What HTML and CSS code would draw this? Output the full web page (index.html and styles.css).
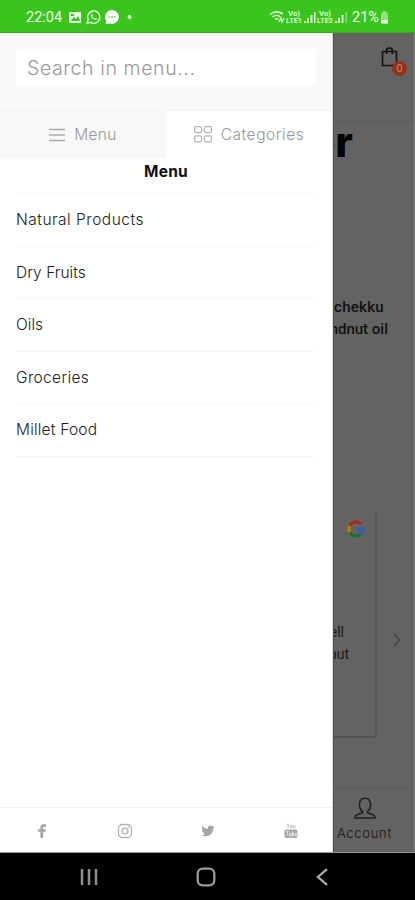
FILE: index.html
```html
<!DOCTYPE html>
<html lang="en">
<head>
<meta charset="utf-8">
<title>Menu</title>
<link rel="stylesheet" href="styles.css">
</head>
<body>
<div class="phone">
  <header class="status">
    <span class="time">22:04</span>
    <svg class="s-left" width="66" height="16" viewBox="0 0 66 16">
      <rect x="1" y="3" width="12" height="11" rx="1" fill="#e9ffe4"/>
      <path d="M3 12l3-4 2 2 2-3 2 5zM3 5h3v2H3z" fill="#3ac51c"/>
      <path d="M19 14.500l1.200-3.600A6.200 6.200 0 1 1 22.500 13.400z" fill="none" stroke="#e9ffe4" stroke-width="1.400"/>
      <path d="M23 5.500c.8-.9 1.300-.3 1.800 1l-.6 1c.6 1 1.200 1.600 2.200 2.100l.9-.8 1.700 1c-.4 3-6.700-.4-6-4.300z" fill="#e9ffe4"/>
      <path d="M44 1a7 7 0 1 1-2.500 13.600L37.500 15l.8-3A7 7 0 0 1 44 1z" fill="#fff"/>
      <path d="M40.500 8h7" stroke="#6fd65a" stroke-width="1.500" stroke-dasharray="1.700 1"/>
      <circle cx="61.500" cy="8" r="1.900" fill="#e9ffe4"/>
    </svg>
    <svg class="s-right" width="79" height="16" viewBox="0 0 79 16" fill="#d8f8d0">
      <path d="M1 5.500Q7 .5 14 5M3.500 8q4-3.500 8 0M6 10.500q2-1.500 3.500 0" fill="none" stroke="#d8f8d0" stroke-width="1.600"/>
      <path d="M10 13l2-4 1 4 2-4" fill="none" stroke="#d8f8d0" stroke-width="1.200"/>
      <text x="19" y="7" class="lte" textLength="12" lengthAdjust="spacingAndGlyphs">Vo)</text>
      <text x="17" y="14" class="lte" textLength="16" lengthAdjust="spacingAndGlyphs">LTE1</text>
      <path d="M35 12h2v2h-2zM38 9h2v5h-2zM41.500 6h2v8h-2zM45 3h1.500v11H45z"/>
      <text x="50" y="7" class="lte" textLength="12" lengthAdjust="spacingAndGlyphs">Vo)</text>
      <text x="48" y="14" class="lte" textLength="16" lengthAdjust="spacingAndGlyphs">LTE2</text>
      <path d="M66 12h2v2h-2zM69 9h2v5h-2zM72.500 6h2v8h-2z"/><path d="M76.500 3H78v11h-1.500z" opacity=".5"/>
    </svg>
    <span class="percent">21%</span>
    <svg class="battery" width="9" height="13" viewBox="0 0 9 13"><path d="M3 0h3v1.500h2V9H1V1.500h2z" fill="#8fe27e"/><path d="M1 9h7v3.500H1z" fill="#fff"/></svg>
  </header>

  <main class="main">
    <aside class="drawer">
      <div class="search-wrap"><div class="search">Search in menu...</div></div>
      <div class="tabs">
        <div class="tab active">
          <svg width="16" height="14" viewBox="0 0 16 14"><path d="M0 1.500h16M0 7h16M0 12.500h16" stroke="#aaa" stroke-width="1.500"/></svg>
          <span class="tab-menu">Menu</span>
        </div>
        <div class="tab">
          <svg width="18" height="17" viewBox="0 0 18 17" fill="none" stroke="#b3b3b3" stroke-width="1.200"><rect x=".6" y=".6" width="7" height="6" rx="1.500"/><rect x="10.400" y=".6" width="7" height="6" rx="1.500"/><rect x=".6" y="9.900" width="7" height="6" rx="1.500"/><rect x="10.400" y="9.900" width="7" height="6" rx="1.500"/></svg>
          <span class="tab-cat">Categories</span>
        </div>
      </div>
      <div class="title">Menu</div>
      <nav class="items">
        <a class="item natural">Natural Products</a>
        <a class="item dry">Dry Fruits</a>
        <a class="item oils">Oils</a>
        <a class="item groceries">Groceries</a>
        <a class="item millet">Millet Food</a>
      </nav>
      <footer class="social">
        <svg width="16" height="16" viewBox="0 0 16 16"><path d="M12 1.200v2.500h-1.600c-1 0-1.200.5-1.200 1.200v1.400h2.700l-.4 2.500H9.200V15H6.400V8.800H4V6.300h2.400v-2C6.400 2 7.800 1 9.900 1z" fill="#a6a6a6"/></svg>
        <svg width="16" height="16" viewBox="0 0 16 16" fill="none" stroke="#b3b3b3" stroke-width="1.300"><rect x="1.500" y="1.500" width="13" height="13" rx="3.800"/><circle cx="8" cy="8" r="2.900"/><circle cx="11.700" cy="4.300" r=".4"/></svg>
        <svg width="16" height="16" viewBox="0 0 16 16"><path d="M14.700 4.200l-1.400 1.300c.1 5.200-5.600 10-11.900 6.700 1.500 0 2.700-.3 3.800-1.200-1.200-.1-2-.7-2.400-1.800h1.100C2.600 8.700 1.900 7.700 1.800 6.400l1.200.3C1.800 5.700 1.600 4.300 2.300 3c1.500 1.800 3.200 2.700 5.500 2.900C7.400 3.200 10.300 1.500 12.300 3.300l1.700-.6-1 1.600z" fill="#a6a6a6"/></svg>
        <svg width="16" height="16" viewBox="0 0 16 16" fill="none"><path d="M4 .5l1.200 2.300L6.400.5M5.200 2.800V5M7.500 2.200h1.300V5H7.500zM10.300 2v3H12V2" stroke="#c2c2c2"/><rect x="1.500" y="6.500" width="13" height="8.500" rx="1.800" fill="#a8a8a8"/><path d="M3.300 8.500h2.500M4.600 8.500v4.500M6.800 9.800V13h1.300V9.800M9.600 8.300V13h1.200v-2.800H9.600M14 12.500h-1.500v-2.300h1v1.200" stroke="#eee" stroke-width=".8"/></svg>
      </footer>
    </aside>

    <section class="page">
      <div class="page-head">
        <div class="cart">
          <svg width="18" height="22" viewBox="0 0 18 22" fill="none" stroke="#151515" stroke-width="1.700"><path d="M1.500 4.500h14v14h-14zM5.500 7V3.500q0-2.500 3-2.500t3 2.500V7"/></svg>
          <span class="badge">0</span>
        </div>
      </div>
      <div class="headline"><span>er</span></div>
      <div class="copy"><div class="line1">chekku</div><div class="line2">groundnut oil</div></div>
      <div class="review-row">
        <div class="review">
          <svg class="google" width="18" height="18" viewBox="0 0 18 18" fill="none" stroke-width="3.200"><path d="M14.100 4.100A7 7 0 0 0 2.800 5.700" stroke="#a8281f"/><path d="M2.800 5.700a7 7 0 0 0 0 6.600" stroke="#b58200"/><path d="M2.800 12.300a7 7 0 0 0 10.500 2.200" stroke="#17742f"/><path d="M13.300 14.500A7 7 0 0 0 16 9H9" stroke="#2f5fae"/></svg>
          <div class="review-text"><div class="r1">well</div><div class="r2">coconut</div></div>
        </div>
        <svg class="next" width="8" height="16" viewBox="0 0 8 16"><path d="M1.500 1.500L6 8l-4.500 6.500" fill="none" stroke="#484848" stroke-width="1.800"/></svg>
      </div>
      <div class="account">
        <svg width="22" height="22" viewBox="0 0 22 22" fill="none" stroke="#202020" stroke-width="1.600"><path d="M8.500 14.500C6 12.500 5.200 9.500 5.500 6.500 5.900 3 8 1.200 11 1.200s5.100 1.800 5.500 5.300c.3 3-.5 6-3 8v1.300l6 2.200q1.500.7 1.500 3H1q0-2.300 1.500-3l6-2.200z"/></svg>
        <span>Account</span>
      </div>
    </section>
  </main>

  <footer class="nav">
    <svg width="18" height="18" viewBox="0 0 18 18"><path d="M2 1v16M9 1v16M16 1v16" stroke="#8e8e8e" stroke-width="2.500"/></svg>
    <svg width="20" height="20" viewBox="0 0 20 20"><rect x="1.700" y="1.700" width="16.600" height="16.600" rx="5" fill="none" stroke="#999" stroke-width="2.300"/></svg>
    <svg width="18" height="18" viewBox="0 0 18 18"><path d="M13 1.200L4 9l9 7.800" fill="none" stroke="#aaa" stroke-width="2.300"/></svg>
  </footer>
</div>
</body>
</html>
```
FILE: styles.css
```css
* { box-sizing: border-box; }
body { margin: 0; background: #000; font-family: Inter, "Open Sans", sans-serif; }
svg { display: block; flex: none; }
.phone { width: 415px; height: 900px; display: flex; flex-direction: column; overflow: hidden; }
.status { height: 33px; background: #3ac51c; border-bottom: 1px solid #33ad1a; display: flex; align-items: center; padding: 2px 24px 0 26px; color: #effff0; font-family: Roboto, sans-serif; font-size: 14.500px; white-space: nowrap; }
.time { width: 42px; }
.s-right { margin-left: auto; }
.lte { font: bold 7px Roboto, sans-serif; }
.percent { margin-left: 4px; width: 28px; }
.battery { margin-left: 0; margin-right: 2px; }
.main { height: 820px; display: flex; border-bottom: 1px solid #999; }
.drawer { width: 333px; background: #fff; display: flex; flex-direction: column; border-right: 1px solid #ddd; }
.search-wrap { height: 78px; background: #f9f9f9; border-bottom: 1px solid #f3f3f3; padding: 16px 16px; }
.search { height: 37px; background: #fff; border-radius: 3px; padding-left: 11px; line-height: 38px; font-size: 19.500px; font-weight: 300; color: #999; letter-spacing: .6px; }
.tabs { display: flex; height: 47px; }
.tab { flex: 1; display: flex; align-items: center; justify-content: center; gap: 9px; font-size: 15.500px; font-weight: 300; color: #999; }
.tab.active { background: #f8f8f8; }
.tab-menu { letter-spacing: .3px; }
.tab-cat { letter-spacing: .55px; }
.title { height: 36px; margin: 0 16px; border-bottom: 1px solid #f9f9f9; text-align: center; line-height: 27px; font-size: 15.500px; font-weight: 700; color: #111; letter-spacing: .2px; }
.items { margin: 0 16px; }
.item { display: block; height: 52.500px; line-height: 51px; border-bottom: 1px solid #f6f6f6; font-size: 15.500px; font-weight: 300; color: #222; }
.natural { letter-spacing: .5px; }
.dry { letter-spacing: .05px; }
.groceries { letter-spacing: .35px; }
.millet { letter-spacing: .2px; }
.social { margin-top: auto; height: 45px; border-top: 1px solid #f1f1f1; display: grid; grid-template-columns: repeat(4, 1fr); justify-items: center; align-items: center; padding-top: 2px; }
.page { width: 82px; background: #636363; border-left: 1px solid #505050; border-right: 2px solid #737373; display: flex; flex-direction: column; overflow: hidden; color: #101010; }
.page-head { height: 89px; border-bottom: 1px solid #595959; padding: 14px 0 0 47px; flex: none; }
.cart { position: relative; width: 18px; }
.badge { position: absolute; left: 11px; top: 14px; width: 15px; height: 15px; border-radius: 50%; background: #94321c; color: #c4877a; font: 11px/15px Roboto, sans-serif; text-align: center; }
.headline { width: 19px; height: 174px; display: flex; justify-content: flex-end; font-size: 42px; line-height: 40px; font-weight: 800; color: #050505; flex: none; }
.copy { height: 213px; display: flex; flex-direction: column; font: 500 15px/22px Roboto, sans-serif; white-space: nowrap; flex: none; }
.line1 { align-self: flex-start; letter-spacing: .3px; }
.line2 { width: 54px; display: flex; justify-content: flex-end; }
.review-row { display: flex; align-items: center; height: 229px; flex: none; }
.review { width: 43px; height: 229px; border-right: 2px solid #5a5a5a; border-bottom: 2px solid #555; border-radius: 0 4px 4px 0; padding-top: 11px; overflow: hidden; }
.google { margin-left: 13px; }
.review-text { padding-top: 83px; font: 14px/22px Roboto, sans-serif; color: #191919; }
.r1, .r2 { display: flex; justify-content: flex-end; }
.r1 { width: 10px; }
.r2 { width: 15px; }
.next { margin: 32px 0 0 16px; }
.account { margin-top: auto; height: 65px; border-top: 1px solid #5c5c5c; display: flex; flex-direction: column; align-items: center; padding: 9px 18px 0 0; font-size: 13px; font-weight: 300; color: #151515; gap: 6px; letter-spacing: .7px; flex: none; }
.nav { height: 47px; background: #000; display: flex; justify-content: space-between; align-items: center; padding: 0 83px 0 80px; }
```
